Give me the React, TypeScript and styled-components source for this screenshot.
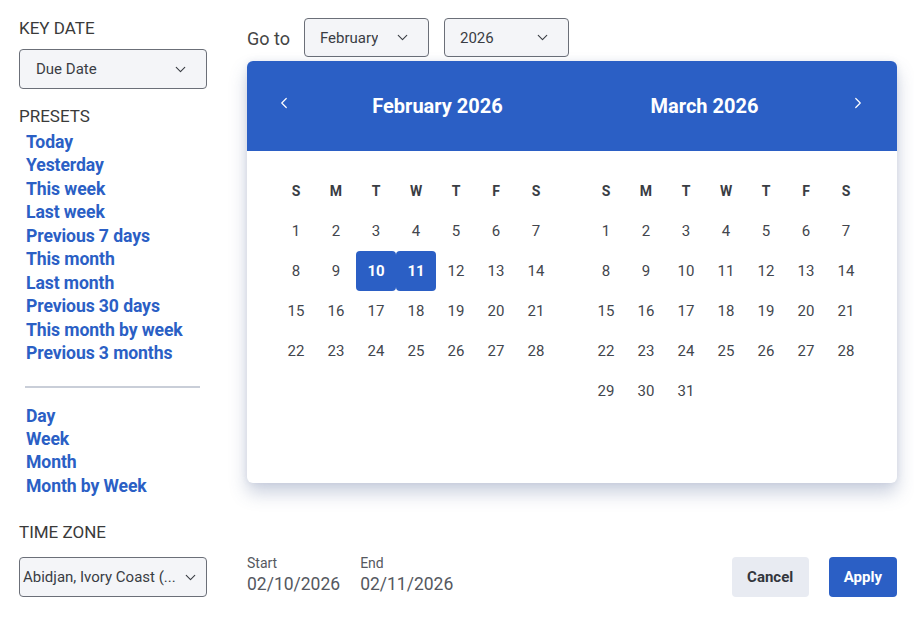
import React from "react";
import styled, { createGlobalStyle } from "styled-components";
import { ChevronDown, ChevronLeft, ChevronRight } from "lucide-react";

const GlobalStyle = createGlobalStyle`
  html, body { margin: 0; padding: 0; background: #fff; }
  body { font-family: Roboto, "Noto Sans", Arial, sans-serif; color: #333; }
  * { box-sizing: border-box; }
`;

const BLUE = "#2b5fc5";

const Page = styled.div`
  display: flex;
  gap: 40px;
  padding: 18px 17px 0 19px;
  width: 914px;
  height: 617px;
`;

const LeftCol = styled.div`
  width: 188px;
  display: flex;
  flex-direction: column;
`;

const SectionLabel = styled.div<{ $mt?: number }>`
  font-size: 17px;
  line-height: 20px;
  color: #3a3a3a;
  text-transform: uppercase;
  margin-top: ${(p) => p.$mt ?? 0}px;
`;

const Select = styled.div<{ $w?: number; $h?: number; $mt?: number }>`
  display: flex;
  align-items: center;
  justify-content: space-between;
  width: ${(p) => (p.$w ? `${p.$w}px` : "100%")};
  height: ${(p) => p.$h ?? 40}px;
  margin-top: ${(p) => p.$mt ?? 0}px;
  border: 1px solid #6b6f78;
  border-radius: 4px;
  background: #f4f5f8;
  font-size: 15px;
  color: #3a3d44;
  flex-shrink: 0;
`;

const SelectText = styled.span<{ $pl: number }>`
  padding-left: ${(p) => p.$pl}px;
  white-space: nowrap;
  overflow: hidden;
`;

const SelectIcon = styled.span<{ $pr: number }>`
  display: flex;
  padding-right: ${(p) => p.$pr}px;
  color: #3a3d44;
`;

const LinkList = styled.div<{ $mt: number }>`
  display: flex;
  flex-direction: column;
  padding-left: 7px;
  margin-top: ${(p) => p.$mt}px;
`;

const PresetLink = styled.a`
  font-size: 17.6px;
  line-height: 23.45px;
  font-weight: 700;
  color: ${BLUE};
  text-decoration: none;
  cursor: pointer;
  letter-spacing: -0.1px;
`;

const Divider = styled.hr`
  margin: 20px 7px 17px 6px;
  border: none;
  height: 2px;
  background: #c9ced8;
`;

const RightCol = styled.div`
  flex: 1;
  display: flex;
  flex-direction: column;
`;

const GoToRow = styled.div`
  display: flex;
  align-items: center;
  gap: 15px;
  height: 39px;
`;

const GoToLabel = styled.span`
  font-size: 18px;
  color: #444;
  margin-right: -1px;
  padding-top: 2px;
`;

const Card = styled.div`
  margin-top: 4px;
  border-radius: 6px;
  background: #fff;
  box-shadow: 0 10px 18px rgba(70, 90, 140, 0.28), 0 0 6px rgba(70, 90, 140, 0.1);
  overflow: hidden;
`;

const CardHeader = styled.div`
  height: 90px;
  background: ${BLUE};
  display: flex;
  align-items: center;
  padding: 0 19px 0 17px;
  color: #fff;
`;

const NavButton = styled.button`
  width: 40px;
  height: 40px;
  border: none;
  background: transparent;
  color: #fff;
  display: flex;
  align-items: center;
  justify-content: center;
  padding: 0;
  margin-top: -6px;
  cursor: pointer;
`;

const MonthTitle = styled.div`
  flex: 1;
  text-align: center;
  font-size: 20px;
  font-weight: 700;
`;

const CardBody = styled.div`
  display: flex;
  gap: 30px;
  padding: 20px 31px 32px 29px;
`;

const Grid = styled.div`
  display: grid;
  grid-template-columns: repeat(7, 40px);
  grid-template-rows: repeat(7, 40px);
`;

const WeekDay = styled.div`
  display: flex;
  align-items: center;
  justify-content: center;
  font-size: 14px;
  font-weight: 700;
  color: #3a3d44;
`;

const Day = styled.div<{ $sel?: boolean }>`
  display: flex;
  align-items: center;
  justify-content: center;
  font-size: 15px;
  font-weight: ${(p) => (p.$sel ? 700 : 400)};
  color: ${(p) => (p.$sel ? "#fff" : "#43464d")};
  background: ${(p) => (p.$sel ? BLUE : "transparent")};
  border-radius: 4px;
`;

const Footer = styled.div`
  margin-top: 72px;
  display: flex;
  align-items: flex-start;
  justify-content: space-between;
`;

const DateGroup = styled.div`
  display: flex;
  gap: 20px;
`;

const DateField = styled.div`
  display: flex;
  flex-direction: column;
  color: #555860;
`;

const DateLabel = styled.span`
  font-size: 14px;
  line-height: 17px;
`;

const DateValue = styled.span`
  font-size: 17.5px;
  line-height: 24px;
`;

const Buttons = styled.div`
  display: flex;
  gap: 20px;
  margin-top: 2px;
`;

const Button = styled.button<{ $primary?: boolean }>`
  height: 40px;
  padding: 0 ${(p) => (p.$primary ? 15 : 15.5)}px;
  border: none;
  border-radius: 4px;
  font-family: inherit;
  font-size: 15px;
  font-weight: 700;
  background: ${(p) => (p.$primary ? BLUE : "#e8ebf2")};
  color: ${(p) => (p.$primary ? "#fff" : "#33363d")};
  cursor: pointer;
`;

const weekdays = ["S", "M", "T", "W", "T", "F", "S"];

function Month({ offset, days, selected }: { offset: number; days: number; selected: number[] }) {
  const cells: React.ReactNode[] = [];
  for (let i = 0; i < offset; i++) cells.push(<div key={`e${i}`} />);
  for (let d = 1; d <= days; d++)
    cells.push(
      <Day key={d} $sel={selected.includes(d)}>
        {d}
      </Day>
    );
  return (
    <Grid>
      {weekdays.map((w, i) => (
        <WeekDay key={i}>{w}</WeekDay>
      ))}
      {cells}
    </Grid>
  );
}

const presets = [
  "Today",
  "Yesterday",
  "This week",
  "Last week",
  "Previous 7 days",
  "This month",
  "Last month",
  "Previous 30 days",
  "This month by week",
  "Previous 3 months",
];
const periods = ["Day", "Week", "Month", "Month by Week"];

export default function App() {
  return (
    <>
      <GlobalStyle />
      <Page>
        <LeftCol>
          <SectionLabel $mt={0}>Key Date</SectionLabel>
          <Select $h={40} $mt={11}>
            <SelectText $pl={16}>Due Date</SelectText>
            <SelectIcon $pr={17}>
              <ChevronDown size={17} strokeWidth={1.6} />
            </SelectIcon>
          </Select>
          <SectionLabel $mt={17}>Presets</SectionLabel>
          <LinkList $mt={5}>
            {presets.map((p) => (
              <PresetLink key={p}>{p}</PresetLink>
            ))}
          </LinkList>
          <Divider />
          <LinkList $mt={0}>
            {periods.map((p) => (
              <PresetLink key={p}>{p}</PresetLink>
            ))}
          </LinkList>
          <SectionLabel $mt={24}>Time Zone</SectionLabel>
          <Select $h={40} $mt={15}>
            <SelectText $pl={3}>Abidjan, Ivory Coast (...</SelectText>
            <SelectIcon $pr={7}>
              <ChevronDown size={17} strokeWidth={1.6} />
            </SelectIcon>
          </Select>
        </LeftCol>
        <RightCol>
          <GoToRow>
            <GoToLabel>Go to</GoToLabel>
            <Select $w={125} $h={39}>
              <SelectText $pl={15}>February</SelectText>
              <SelectIcon $pr={17}>
                <ChevronDown size={17} strokeWidth={1.6} />
              </SelectIcon>
            </Select>
            <Select $w={125} $h={39}>
              <SelectText $pl={15}>2026</SelectText>
              <SelectIcon $pr={17}>
                <ChevronDown size={17} strokeWidth={1.6} />
              </SelectIcon>
            </Select>
          </GoToRow>
          <Card>
            <CardHeader>
              <NavButton aria-label="Previous month">
                <ChevronLeft size={18} strokeWidth={1.6} />
              </NavButton>
              <MonthTitle>February 2026</MonthTitle>
              <MonthTitle>March 2026</MonthTitle>
              <NavButton aria-label="Next month">
                <ChevronRight size={18} strokeWidth={1.6} />
              </NavButton>
            </CardHeader>
            <CardBody>
              <Month offset={0} days={28} selected={[10, 11]} />
              <Month offset={0} days={31} selected={[]} />
            </CardBody>
          </Card>
          <Footer>
            <DateGroup>
              <DateField>
                <DateLabel>Start</DateLabel>
                <DateValue>02/10/2026</DateValue>
              </DateField>
              <DateField>
                <DateLabel>End</DateLabel>
                <DateValue>02/11/2026</DateValue>
              </DateField>
            </DateGroup>
            <Buttons>
              <Button>Cancel</Button>
              <Button $primary>Apply</Button>
            </Buttons>
          </Footer>
        </RightCol>
      </Page>
    </>
  );
}
